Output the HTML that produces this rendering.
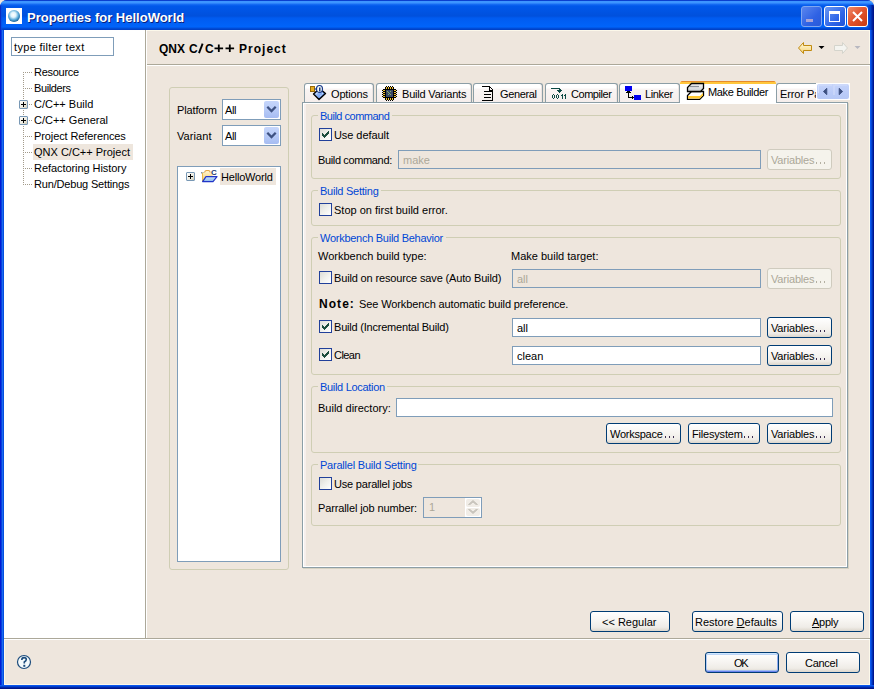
<!DOCTYPE html><html><head><meta charset="utf-8"><style>
*{margin:0;padding:0}
html,body{width:874px;height:689px;overflow:hidden;background:#EEE6DD}
.b{position:absolute;box-sizing:border-box}
.t{position:absolute;font:11px "Liberation Sans",sans-serif;line-height:13px;white-space:nowrap;color:#000}
.dis{color:#ACA899}
.gt{color:#0046D5}
.btn{border:1px solid #003C74;border-radius:3px;background:linear-gradient(#FFFFFF 0%,#F7F5F2 45%,#EFECE7 80%,#DCD6CC 100%)}
.btn.def{box-shadow:inset 0 1px 0 #CEE7FF, inset 0 2px 0 #BCD4F6, inset 0 -1px 0 #6982EE, inset 0 -2px 0 #A4BEF2, inset 1px 0 0 #B4CCF4, inset -1px 0 0 #8EAAF0}
.btn.dis{border-color:#CFCBBE;background:#F5F3EC}
.fld{border:1px solid #7F9DB9;background:#fff}
.fdis{background:#EEE6DD}
.chk{border:1px solid #21409A;background:linear-gradient(135deg,#DCDCD7 0%,#F0F0EC 50%,#FFFFFF 100%)}
.grp{border:1px solid #CFCEB4;border-radius:3px}
</style></head><body><div class="b" style="left:0;top:0;width:874px;height:689px;border-radius:7px 7px 0 0;background:#0054E3;overflow:hidden"><div class="b" style="left:0;top:0;width:874px;height:30px;background:linear-gradient(#0A3FCF 0px,#0A3FCF 1px,#3D95FF 1px,#3D95FF 3px,#1A6FF5 4px,#0058EA 6px,#0055E5 10px,#0050DC 16px,#005BF0 18px,#0064FA 27px,#0050DD 28px,#003CC0 30px)"></div><div class="b" style="left:0;top:5px;width:3px;height:25px;background:linear-gradient(90deg,#0A2CC0 0 1px,rgba(8,72,224,0.6) 1px 2px,rgba(8,80,230,0.2) 2px 3px)"></div><div class="b" style="left:867px;top:5px;width:7px;height:25px;background:linear-gradient(90deg,rgba(0,60,210,0.3) 0 1px,rgba(0,56,200,0.5) 1px 2px,rgba(0,50,190,0.7) 2px 3px,#0040C8 3px 4px,#0030B0 4px 5px,#00209C 5px 6px,#001488 6px 7px)"></div><div class="b" style="left:0;top:30px;width:4px;height:659px;background:linear-gradient(90deg,#001CD6 0 1px,#0840DD 1px 2px,#1A6AF0 2px 3px,#0450E0 3px 4px)"></div><div class="b" style="left:870px;top:30px;width:4px;height:659px;background:linear-gradient(90deg,#0A5AF0 0 1px,#0545D8 1px 2px,#0030B0 2px 3px,#001490 3px 4px)"></div><div class="b" style="left:0;top:685px;width:874px;height:4px;background:linear-gradient(#0A56EE 0 1px,#0040D0 1px 2px,#0028A8 2px 3px,#001488 3px 4px)"></div></div>
<div class="b" style="left:0;top:0;width:5px;height:5px;background:#D8CDB0;z-index:-1"></div>
<div class="b" style="left:6px;top:8px;width:16px;height:16px;background:#fff"><svg width="16" height="16" style="position:absolute;left:0;top:0"><defs><radialGradient id="gl" cx="45%" cy="40%" r="60%"><stop offset="0" stop-color="#ffffff"/><stop offset="0.35" stop-color="#E0F4FC"/><stop offset="0.7" stop-color="#5AAAD8"/><stop offset="1" stop-color="#15609A"/></radialGradient></defs><circle cx="8" cy="8" r="6" fill="url(#gl)"/></svg></div>
<div class="t" style="left:28px;top:11px;font:bold 13px 'Liberation Sans',sans-serif;line-height:16px;color:#0A1E7A">Properties for HelloWorld</div>
<div class="t" style="left:27px;top:10px;font:bold 13px 'Liberation Sans',sans-serif;line-height:16px;color:#fff">Properties for HelloWorld</div>
<div class="b" style="left:801px;top:6px;width:21px;height:21px;border:1px solid #7FA6F0;border-radius:3px;background:linear-gradient(135deg,#5A86EE,#2F62E4 60%,#2A5AD8)"><div class="b" style="left:4px;top:12px;width:7px;height:3px;background:#A9A4D6"></div></div>
<div class="b" style="left:824px;top:6px;width:22px;height:21px;border:1px solid #fff;border-radius:3px;background:linear-gradient(135deg,#6C98F2,#2F66E8 60%,#1E52D8)"><div class="b" style="left:4px;top:4px;width:11px;height:11px;border:1px solid #fff;border-top-width:3px"></div></div>
<div class="b" style="left:847px;top:6px;width:21px;height:21px;border:1px solid #fff;border-radius:3px;background:linear-gradient(135deg,#F08A68,#E0522C 50%,#C83A10)"><svg width="19" height="19" style="position:absolute;left:0;top:0"><path d="M5 5 L14 14 M14 5 L5 14" stroke="#fff" stroke-width="2"/></svg></div>
<div class="b" style="left:4px;top:30px;width:866px;height:655px;background:#EEE6DD;border:1px solid #FCF8EA;border-right-color:#FCF8EA"></div>
<div class="b" style="left:4px;top:30px;width:141px;height:608px;background:#fff"></div>
<div class="b" style="left:145px;top:30px;width:1px;height:608px;background:#ACA899"></div>
<div class="b" style="left:146px;top:30px;width:1px;height:608px;background:#fff"></div>
<div class="b" style="left:147px;top:64px;width:723px;height:1px;background:#ACA899"></div>
<div class="b" style="left:147px;top:65px;width:723px;height:1px;background:#fff"></div>
<div class="b" style="left:4px;top:638px;width:866px;height:1px;background:#ACA899"></div>
<div class="b" style="left:4px;top:639px;width:866px;height:1px;background:#fff"></div>
<div class="b fld" style="left:11px;top:37px;width:103px;height:19px;"></div>
<div class="t " style="left:14px;top:41px;font:11px 'Liberation Sans',sans-serif;line-height:13px;letter-spacing:0.32px;">type filter text</div>
<div class="b" style="left:23px;top:72px;width:1px;height:113px;background:repeating-linear-gradient(#A39B8B 0 1px,transparent 1px 2px)"></div>
<div class="b" style="left:25px;top:72px;width:8px;height:1px;background:repeating-linear-gradient(90deg,#A39B8B 0 1px,transparent 1px 2px)"></div>
<div class="t " style="left:34px;top:66px;font:11px 'Liberation Sans',sans-serif;line-height:13px;letter-spacing:-0.27px;">Resource</div>
<div class="b" style="left:25px;top:88px;width:8px;height:1px;background:repeating-linear-gradient(90deg,#A39B8B 0 1px,transparent 1px 2px)"></div>
<div class="t " style="left:34px;top:82px;font:11px 'Liberation Sans',sans-serif;line-height:13px;letter-spacing:-0.39px;">Builders</div>
<div class="b" style="left:25px;top:104px;width:8px;height:1px;background:repeating-linear-gradient(90deg,#A39B8B 0 1px,transparent 1px 2px)"></div>
<div class="b" style="left:19px;top:100px;width:9px;height:9px;border:1px solid #7898B5;border-radius:1px;background:linear-gradient(135deg,#fff,#E8E6DA 70%,#C8C4B0)"><div class="b" style="left:1px;top:3px;width:5px;height:1px;background:#000"></div><div class="b" style="left:3px;top:1px;width:1px;height:5px;background:#000"></div></div>
<div class="t " style="left:34px;top:98px;font:11px 'Liberation Sans',sans-serif;line-height:13px;">C/C++ Build</div>
<div class="b" style="left:25px;top:120px;width:8px;height:1px;background:repeating-linear-gradient(90deg,#A39B8B 0 1px,transparent 1px 2px)"></div>
<div class="b" style="left:19px;top:116px;width:9px;height:9px;border:1px solid #7898B5;border-radius:1px;background:linear-gradient(135deg,#fff,#E8E6DA 70%,#C8C4B0)"><div class="b" style="left:1px;top:3px;width:5px;height:1px;background:#000"></div><div class="b" style="left:3px;top:1px;width:1px;height:5px;background:#000"></div></div>
<div class="t " style="left:34px;top:114px;font:11px 'Liberation Sans',sans-serif;line-height:13px;">C/C++ General</div>
<div class="b" style="left:25px;top:136px;width:8px;height:1px;background:repeating-linear-gradient(90deg,#A39B8B 0 1px,transparent 1px 2px)"></div>
<div class="t " style="left:34px;top:130px;font:11px 'Liberation Sans',sans-serif;line-height:13px;letter-spacing:-0.10px;">Project References</div>
<div class="b " style="left:33px;top:144px;width:100px;height:16px;background:#EEE6DD"></div>
<div class="b" style="left:25px;top:152px;width:8px;height:1px;background:repeating-linear-gradient(90deg,#A39B8B 0 1px,transparent 1px 2px)"></div>
<div class="t " style="left:34px;top:146px;font:11px 'Liberation Sans',sans-serif;line-height:13px;">QNX C/C++ Project</div>
<div class="b" style="left:25px;top:168px;width:8px;height:1px;background:repeating-linear-gradient(90deg,#A39B8B 0 1px,transparent 1px 2px)"></div>
<div class="t " style="left:34px;top:162px;font:11px 'Liberation Sans',sans-serif;line-height:13px;letter-spacing:-0.06px;">Refactoring History</div>
<div class="b" style="left:25px;top:184px;width:8px;height:1px;background:repeating-linear-gradient(90deg,#A39B8B 0 1px,transparent 1px 2px)"></div>
<div class="t " style="left:34px;top:178px;font:11px 'Liberation Sans',sans-serif;line-height:13px;letter-spacing:-0.18px;">Run/Debug Settings</div>
<div class="t " style="left:159px;top:42px;font:bold 12px 'Liberation Sans',sans-serif;line-height:15px;">QNX</div>
<div class="t " style="left:189px;top:42px;font:bold 12px 'Liberation Sans',sans-serif;line-height:15px;">C</div>
<svg style="position:absolute;left:190px;top:40px" width="20" height="16"><path d="M9 13.2 L12.6 3.6" stroke="#000" stroke-width="1.9"/></svg>
<div class="t " style="left:205px;top:42px;font:bold 12px 'Liberation Sans',sans-serif;line-height:15px;">C</div>
<svg style="position:absolute;left:210px;top:40px" width="30" height="16"><path d="M4.5 8.3 H13.1 M8.8 4.5 V12.1 M15.5 8.3 H24.1 M19.8 4.5 V12.1" stroke="#000" stroke-width="1.8"/></svg>
<div class="t " style="left:239px;top:42px;font:bold 12px 'Liberation Sans',sans-serif;line-height:15px;letter-spacing:1.02px;">Project</div>
<svg style="position:absolute;left:796px;top:40px" width="70" height="16"><defs><linearGradient id="ya" x1="0" y1="0" x2="0" y2="1"><stop offset="0" stop-color="#FFFBE2"/><stop offset="1" stop-color="#F6D272"/></linearGradient></defs><path d="M2.5 8 L7.5 2.5 L7.5 5.5 L15.5 5.5 L15.5 10.5 L7.5 10.5 L7.5 13.5 Z" fill="url(#ya)" stroke="#C08A10" stroke-width="1"/><path d="M22.5 6 L28.5 6 L25.5 9 Z" fill="#000"/><path d="M51.5 8 L46.5 2.5 L46.5 5.5 L38.5 5.5 L38.5 10.5 L46.5 10.5 L46.5 13.5 Z" fill="#F4F4F0" stroke="#D4D4CC" stroke-width="1"/><path d="M58.5 6 L64.5 6 L61.5 9 Z" fill="#B8B8C0"/></svg>
<div class="b grp" style="left:169px;top:87px;width:120px;height:483px;"></div>
<div class="t " style="left:177px;top:104px;font:11px 'Liberation Sans',sans-serif;line-height:13px;letter-spacing:-0.14px;">Platform</div>
<div class="t " style="left:177px;top:130px;font:11px 'Liberation Sans',sans-serif;line-height:13px;letter-spacing:0.08px;">Variant</div>
<div class="b fld" style="left:222px;top:99px;width:59px;height:21px;"></div>
<div class="t " style="left:225px;top:104px;font:11px 'Liberation Sans',sans-serif;line-height:13px;">A</div>
<div class="t " style="left:232px;top:104px;font:11px 'Liberation Sans',sans-serif;line-height:13px;">l</div>
<div class="t " style="left:234px;top:104px;font:11px 'Liberation Sans',sans-serif;line-height:13px;">l</div>
<div class="b" style="left:264px;top:101px;width:15px;height:17px;border-radius:2px;background:linear-gradient(#C6D6FB,#B4C8F6 60%,#A6BCF2)"><svg width="15" height="17" style="position:absolute;left:0;top:0"><path d="M3.3 5.8 L7.5 10 L11.7 5.8" stroke="#3E5282" stroke-width="2.3" fill="none"/></svg></div>
<div class="b fld" style="left:222px;top:125px;width:59px;height:21px;"></div>
<div class="t " style="left:225px;top:130px;font:11px 'Liberation Sans',sans-serif;line-height:13px;">A</div>
<div class="t " style="left:232px;top:130px;font:11px 'Liberation Sans',sans-serif;line-height:13px;">l</div>
<div class="t " style="left:234px;top:130px;font:11px 'Liberation Sans',sans-serif;line-height:13px;">l</div>
<div class="b" style="left:264px;top:127px;width:15px;height:17px;border-radius:2px;background:linear-gradient(#C6D6FB,#B4C8F6 60%,#A6BCF2)"><svg width="15" height="17" style="position:absolute;left:0;top:0"><path d="M3.3 5.8 L7.5 10 L11.7 5.8" stroke="#3E5282" stroke-width="2.3" fill="none"/></svg></div>
<div class="b fld" style="left:177px;top:166px;width:104px;height:396px;"></div>
<div class="b" style="left:186px;top:172px;width:9px;height:9px;border:1px solid #7898B5;border-radius:1px;background:linear-gradient(135deg,#fff,#E8E6DA 70%,#C8C4B0)"><div class="b" style="left:1px;top:3px;width:5px;height:1px;background:#000"></div><div class="b" style="left:3px;top:1px;width:1px;height:5px;background:#000"></div></div>
<div class="b " style="left:220px;top:168px;width:56px;height:17px;background:#EEE6DD"></div>
<svg style="position:absolute;left:200px;top:168px" width="19" height="16"><defs><linearGradient id="fy" x1="0" y1="0" x2="0" y2="1"><stop offset="0" stop-color="#FFF0C0"/><stop offset="1" stop-color="#F2C860"/></linearGradient><linearGradient id="fb" x1="0" y1="0" x2="0" y2="1"><stop offset="0" stop-color="#CDE6FA"/><stop offset="1" stop-color="#8CB8EC"/></linearGradient></defs><rect x="1" y="4" width="3" height="1.5" fill="#8898A8"/><path d="M4.5 5 Q4.8 2.5 6.5 2.5 L8.5 2.5 Q10 2.5 10.2 5" stroke="#E2A84A" stroke-width="1.1" fill="#FFF2C8"/><rect x="2" y="4.5" width="10.5" height="9" fill="url(#fy)"/><path d="M2.5 5 V13.5" stroke="#E8B848" stroke-width="1"/><path d="M6 8.6 L17 8.6 L13 13.6 L2.6 13.6 Z" fill="url(#fb)" stroke="#2034C8" stroke-width="1.2" stroke-linejoin="round"/><text x="11" y="6.8" font-family="Liberation Sans" font-size="8" font-weight="bold" fill="#1C3A70">C</text></svg>
<div class="t " style="left:221px;top:171px;font:11px 'Liberation Sans',sans-serif;line-height:13px;letter-spacing:-0.19px;">HelloWorld</div>
<div class="b " style="left:302px;top:102px;width:546px;height:466px;border:1px solid #8C9EA6;background:#EEE6DD"></div>
<div class="b " style="left:303px;top:103px;width:544px;height:464px;border:1px solid #fff"></div>
<div class="b" style="left:304px;top:104px;width:2px;height:462px;background:#F6EFEC"></div>
<div class="b" style="left:848px;top:103px;width:1px;height:466px;background:#D6D2C2"></div>
<div class="b" style="left:303px;top:568px;width:546px;height:1px;background:#D6D2C2"></div>
<div class="b" style="left:304px;top:83px;width:70px;height:19px;border:1px solid #8C9EA6;border-bottom:none;border-radius:3px 3px 0 0;background:linear-gradient(#FFFFFF 0,#FFFFFF 4px,#F9F4F3 5px,#F5EEEC 100%);box-shadow:inset -1px 0 #ECE4E1"></div>
<div class="t " style="left:331px;top:88px;font:11px 'Liberation Sans',sans-serif;line-height:13px;letter-spacing:-0.17px;">Options</div>
<svg style="position:absolute;left:308px;top:84px" width="20" height="17"><defs><linearGradient id="og" x1="0" y1="0" x2="1" y2="1"><stop offset="0" stop-color="#D6E6FF"/><stop offset="1" stop-color="#3A78E8"/></linearGradient></defs><path d="M5.5 10 L11.5 4.5 L17.5 9.5 L11 15.5 Z" fill="url(#og)" stroke="#000" stroke-width="1.4" stroke-linejoin="round"/><path d="M8 10 L11.5 7 L15 9.8 L11 13" fill="none" stroke="#E8F0FF" stroke-width="1" stroke-dasharray="1 1"/><rect x="2.5" y="2.5" width="4" height="5" fill="#E6AE22" stroke="#9A6A08" stroke-width="1"/><ellipse cx="11.5" cy="5" rx="3" ry="3.5" fill="#F4F8F0" stroke="#1A3A8A" stroke-width="1.2"/><path d="M6.5 5 L8.5 5" stroke="#1A3A8A" stroke-width="1.2"/><rect x="11" y="3.5" width="1.5" height="4" fill="#1A3A8A"/></svg>
<div class="b" style="left:376px;top:83px;width:96px;height:19px;border:1px solid #8C9EA6;border-bottom:none;border-radius:3px 3px 0 0;background:linear-gradient(#FFFFFF 0,#FFFFFF 4px,#F9F4F3 5px,#F5EEEC 100%);box-shadow:inset -1px 0 #ECE4E1"></div>
<div class="t " style="left:402px;top:88px;font:11px 'Liberation Sans',sans-serif;line-height:13px;letter-spacing:-0.20px;">Build Variants</div>
<svg style="position:absolute;left:382px;top:86px" width="17" height="16" shape-rendering="crispEdges"><rect x="4" y="0" width="1" height="1" fill="#000"/><rect x="6" y="0" width="1" height="1" fill="#000"/><rect x="8" y="0" width="1" height="1" fill="#000"/><rect x="10" y="0" width="1" height="1" fill="#000"/><rect x="3" y="1" width="1" height="1" fill="#000"/><rect x="4" y="1" width="1" height="1" fill="#F2C030"/><rect x="5" y="1" width="1" height="1" fill="#000"/><rect x="6" y="1" width="1" height="1" fill="#F2C030"/><rect x="7" y="1" width="1" height="1" fill="#000"/><rect x="8" y="1" width="1" height="1" fill="#F2C030"/><rect x="9" y="1" width="1" height="1" fill="#000"/><rect x="10" y="1" width="1" height="1" fill="#F2C030"/><rect x="11" y="1" width="1" height="1" fill="#000"/><rect x="3" y="2" width="1" height="1" fill="#000"/><rect x="4" y="2" width="1" height="1" fill="#F2C030"/><rect x="5" y="2" width="1" height="1" fill="#000"/><rect x="6" y="2" width="1" height="1" fill="#F2C030"/><rect x="7" y="2" width="1" height="1" fill="#000"/><rect x="8" y="2" width="1" height="1" fill="#F2C030"/><rect x="9" y="2" width="1" height="1" fill="#000"/><rect x="10" y="2" width="1" height="1" fill="#F2C030"/><rect x="11" y="2" width="1" height="1" fill="#000"/><rect x="1" y="3" width="13" height="1" fill="#000"/><rect x="0" y="4" width="1" height="1" fill="#000"/><rect x="1" y="4" width="2" height="1" fill="#F2C030"/><rect x="3" y="4" width="1" height="1" fill="#000"/><rect x="4" y="4" width="7" height="1" fill="#3A4868"/><rect x="11" y="4" width="1" height="1" fill="#000"/><rect x="12" y="4" width="2" height="1" fill="#F2C030"/><rect x="14" y="4" width="1" height="1" fill="#000"/><rect x="1" y="5" width="3" height="1" fill="#000"/><rect x="4" y="5" width="1" height="1" fill="#3A4868"/><rect x="5" y="5" width="1" height="1" fill="#8CB060"/><rect x="6" y="5" width="2" height="1" fill="#3A4868"/><rect x="8" y="5" width="1" height="1" fill="#8CB060"/><rect x="9" y="5" width="2" height="1" fill="#3A4868"/><rect x="11" y="5" width="3" height="1" fill="#000"/><rect x="0" y="6" width="1" height="1" fill="#000"/><rect x="1" y="6" width="2" height="1" fill="#F2C030"/><rect x="3" y="6" width="1" height="1" fill="#000"/><rect x="4" y="6" width="2" height="1" fill="#3A4868"/><rect x="6" y="6" width="1" height="1" fill="#8CB060"/><rect x="7" y="6" width="4" height="1" fill="#3A4868"/><rect x="11" y="6" width="1" height="1" fill="#000"/><rect x="12" y="6" width="2" height="1" fill="#F2C030"/><rect x="14" y="6" width="1" height="1" fill="#000"/><rect x="1" y="7" width="3" height="1" fill="#000"/><rect x="4" y="7" width="3" height="1" fill="#3A4868"/><rect x="7" y="7" width="1" height="1" fill="#8CB060"/><rect x="8" y="7" width="3" height="1" fill="#3A4868"/><rect x="11" y="7" width="3" height="1" fill="#000"/><rect x="0" y="8" width="1" height="1" fill="#000"/><rect x="1" y="8" width="2" height="1" fill="#F2C030"/><rect x="3" y="8" width="1" height="1" fill="#000"/><rect x="4" y="8" width="2" height="1" fill="#3A4868"/><rect x="6" y="8" width="1" height="1" fill="#8CB060"/><rect x="7" y="8" width="1" height="1" fill="#3A4868"/><rect x="8" y="8" width="1" height="1" fill="#8CB060"/><rect x="9" y="8" width="2" height="1" fill="#3A4868"/><rect x="11" y="8" width="1" height="1" fill="#000"/><rect x="12" y="8" width="2" height="1" fill="#F2C030"/><rect x="14" y="8" width="1" height="1" fill="#000"/><rect x="1" y="9" width="3" height="1" fill="#000"/><rect x="4" y="9" width="7" height="1" fill="#3A4868"/><rect x="11" y="9" width="3" height="1" fill="#000"/><rect x="0" y="10" width="1" height="1" fill="#000"/><rect x="1" y="10" width="2" height="1" fill="#F2C030"/><rect x="3" y="10" width="1" height="1" fill="#000"/><rect x="4" y="10" width="7" height="1" fill="#3A4868"/><rect x="11" y="10" width="1" height="1" fill="#000"/><rect x="12" y="10" width="2" height="1" fill="#F2C030"/><rect x="14" y="10" width="1" height="1" fill="#000"/><rect x="1" y="11" width="13" height="1" fill="#000"/><rect x="3" y="12" width="1" height="1" fill="#000"/><rect x="4" y="12" width="1" height="1" fill="#F2C030"/><rect x="5" y="12" width="1" height="1" fill="#000"/><rect x="6" y="12" width="1" height="1" fill="#F2C030"/><rect x="7" y="12" width="1" height="1" fill="#000"/><rect x="8" y="12" width="1" height="1" fill="#F2C030"/><rect x="9" y="12" width="1" height="1" fill="#000"/><rect x="10" y="12" width="1" height="1" fill="#F2C030"/><rect x="11" y="12" width="1" height="1" fill="#000"/><rect x="3" y="13" width="1" height="1" fill="#000"/><rect x="4" y="13" width="1" height="1" fill="#F2C030"/><rect x="5" y="13" width="1" height="1" fill="#000"/><rect x="6" y="13" width="1" height="1" fill="#F2C030"/><rect x="7" y="13" width="1" height="1" fill="#000"/><rect x="8" y="13" width="1" height="1" fill="#F2C030"/><rect x="9" y="13" width="1" height="1" fill="#000"/><rect x="10" y="13" width="1" height="1" fill="#F2C030"/><rect x="11" y="13" width="1" height="1" fill="#000"/><rect x="4" y="14" width="1" height="1" fill="#000"/><rect x="6" y="14" width="1" height="1" fill="#000"/><rect x="8" y="14" width="1" height="1" fill="#000"/><rect x="10" y="14" width="1" height="1" fill="#000"/></svg>
<div class="b" style="left:473px;top:83px;width:70px;height:19px;border:1px solid #8C9EA6;border-bottom:none;border-radius:3px 3px 0 0;background:linear-gradient(#FFFFFF 0,#FFFFFF 4px,#F9F4F3 5px,#F5EEEC 100%);box-shadow:inset -1px 0 #ECE4E1"></div>
<div class="t " style="left:500px;top:88px;font:11px 'Liberation Sans',sans-serif;line-height:13px;letter-spacing:-0.37px;">General</div>
<svg style="position:absolute;left:481px;top:86px" width="13" height="15" shape-rendering="crispEdges"><rect x="1" y="0" width="8" height="1" fill="#000"/><rect x="8" y="1" width="2" height="1" fill="#000"/><rect x="8" y="2" width="1" height="1" fill="#000"/><rect x="10" y="2" width="1" height="1" fill="#000"/><rect x="8" y="3" width="1" height="1" fill="#000"/><rect x="11" y="3" width="1" height="1" fill="#000"/><rect x="8" y="4" width="4" height="1" fill="#000"/><rect x="3" y="5" width="9" height="1" fill="#000"/><rect x="11" y="6" width="1" height="1" fill="#000"/><rect x="11" y="7" width="1" height="1" fill="#000"/><rect x="3" y="8" width="7" height="1" fill="#000"/><rect x="11" y="8" width="1" height="1" fill="#000"/><rect x="11" y="9" width="1" height="1" fill="#000"/><rect x="11" y="10" width="1" height="1" fill="#000"/><rect x="3" y="11" width="7" height="1" fill="#000"/><rect x="11" y="11" width="1" height="1" fill="#000"/><rect x="11" y="12" width="1" height="1" fill="#000"/><rect x="11" y="13" width="1" height="1" fill="#000"/><rect x="1" y="14" width="11" height="1" fill="#000"/></svg>
<div class="b" style="left:545px;top:83px;width:73px;height:19px;border:1px solid #8C9EA6;border-bottom:none;border-radius:3px 3px 0 0;background:linear-gradient(#FFFFFF 0,#FFFFFF 4px,#F9F4F3 5px,#F5EEEC 100%);box-shadow:inset -1px 0 #ECE4E1"></div>
<div class="t " style="left:571px;top:88px;font:11px 'Liberation Sans',sans-serif;line-height:13px;letter-spacing:-0.46px;">Compiler</div>
<svg style="position:absolute;left:550px;top:87px" width="17" height="13" shape-rendering="crispEdges"><rect x="1" y="1" width="9" height="1" fill="#0C4A44"/><rect x="9" y="2" width="2" height="1" fill="#0C4A44"/><rect x="7" y="3" width="5" height="1" fill="#0C4A44"/><rect x="8" y="4" width="3" height="1" fill="#0C4A44"/><rect x="9" y="5" width="1" height="1" fill="#0C4A44"/><rect x="3" y="7" width="1" height="1" fill="#0C4A44"/><rect x="7" y="7" width="1" height="1" fill="#0C4A44"/><rect x="12" y="7" width="1" height="1" fill="#0C4A44"/><rect x="15" y="7" width="1" height="1" fill="#0C4A44"/><rect x="2" y="8" width="1" height="1" fill="#0C4A44"/><rect x="4" y="8" width="1" height="1" fill="#0C4A44"/><rect x="6" y="8" width="1" height="1" fill="#0C4A44"/><rect x="8" y="8" width="1" height="1" fill="#0C4A44"/><rect x="11" y="8" width="2" height="1" fill="#0C4A44"/><rect x="14" y="8" width="2" height="1" fill="#0C4A44"/><rect x="2" y="9" width="1" height="1" fill="#0C4A44"/><rect x="4" y="9" width="1" height="1" fill="#0C4A44"/><rect x="6" y="9" width="1" height="1" fill="#0C4A44"/><rect x="8" y="9" width="1" height="1" fill="#0C4A44"/><rect x="12" y="9" width="1" height="1" fill="#0C4A44"/><rect x="15" y="9" width="1" height="1" fill="#0C4A44"/><rect x="2" y="10" width="1" height="1" fill="#0C4A44"/><rect x="4" y="10" width="1" height="1" fill="#0C4A44"/><rect x="6" y="10" width="1" height="1" fill="#0C4A44"/><rect x="8" y="10" width="1" height="1" fill="#0C4A44"/><rect x="12" y="10" width="1" height="1" fill="#0C4A44"/><rect x="15" y="10" width="1" height="1" fill="#0C4A44"/><rect x="3" y="11" width="1" height="1" fill="#0C4A44"/><rect x="7" y="11" width="1" height="1" fill="#0C4A44"/><rect x="12" y="11" width="1" height="1" fill="#0C4A44"/><rect x="15" y="11" width="1" height="1" fill="#0C4A44"/></svg>
<div class="b" style="left:619px;top:83px;width:61px;height:19px;border:1px solid #8C9EA6;border-bottom:none;border-radius:3px 3px 0 0;background:linear-gradient(#FFFFFF 0,#FFFFFF 4px,#F9F4F3 5px,#F5EEEC 100%);box-shadow:inset -1px 0 #ECE4E1"></div>
<div class="t " style="left:645px;top:88px;font:11px 'Liberation Sans',sans-serif;line-height:13px;letter-spacing:-0.38px;">Linker</div>
<svg style="position:absolute;left:624px;top:85px" width="18" height="16" shape-rendering="crispEdges"><rect x="1" y="1" width="7" height="1" fill="#0000F0"/><rect x="1" y="2" width="7" height="1" fill="#0000F0"/><rect x="1" y="3" width="7" height="1" fill="#0000F0"/><rect x="1" y="4" width="7" height="1" fill="#0000F0"/><rect x="1" y="5" width="7" height="1" fill="#0000F0"/><rect x="3" y="6" width="3" height="1" fill="#000"/><rect x="2" y="7" width="5" height="1" fill="#000"/><rect x="4" y="8" width="1" height="1" fill="#000"/><rect x="4" y="9" width="1" height="1" fill="#000"/><rect x="4" y="10" width="1" height="1" fill="#000"/><rect x="10" y="10" width="7" height="1" fill="#0000F0"/><rect x="4" y="11" width="1" height="1" fill="#000"/><rect x="8" y="11" width="1" height="1" fill="#000"/><rect x="10" y="11" width="7" height="1" fill="#0000F0"/><rect x="4" y="12" width="6" height="1" fill="#000"/><rect x="10" y="12" width="7" height="1" fill="#0000F0"/><rect x="8" y="13" width="1" height="1" fill="#000"/><rect x="10" y="13" width="7" height="1" fill="#0000F0"/><rect x="10" y="14" width="7" height="1" fill="#0000F0"/></svg>
<div class="b" style="left:776px;top:83px;width:45px;height:19px;border:1px solid #8C9EA6;border-bottom:none;border-right:none;border-radius:3px 0 0 0;background:linear-gradient(#FFFFFF 0,#FFFFFF 4px,#F9F4F3 5px,#F5EEEC 100%);box-shadow:inset -1px 0 #ECE4E1;overflow:hidden"><div class="t" style="left:3px;top:4px;letter-spacing:-0.1px">Error Pages</div></div>
<div class="b" style="left:680px;top:81px;width:96px;height:23px;background:#fff"></div>
<div class="b" style="left:680px;top:81px;width:96px;height:3px;border-radius:2px 2px 0 0;background:linear-gradient(#E68B2C 0,#E68B2C 1px,#FFC73C 1px)"></div>
<div class="t " style="left:708px;top:86px;font:11px 'Liberation Sans',sans-serif;line-height:13px;letter-spacing:-0.35px;">Make Builder</div>
<svg style="position:absolute;left:685px;top:82px" width="20" height="18"><defs><linearGradient id="mg" x1="0" y1="0" x2="0" y2="1"><stop offset="0" stop-color="#F8F8F8"/><stop offset="1" stop-color="#C8CCD0"/></linearGradient></defs><path d="M6.5 9.5 H18.5 V13.5 L14.5 17.5 H2.5 V13.5 Z" fill="#fff" stroke="#000" stroke-width="1.3"/><rect x="3" y="14" width="12" height="2.5" fill="#FFC830"/><path d="M15 14 L18 11 L18 13.3 L14.8 16.8 Z" fill="#FFC830"/><path d="M6.5 1.5 H18.5 V6.5 L15.5 9.5 H2.5 V5.5 Z" fill="url(#mg)" stroke="#000" stroke-width="1.3"/><path d="M5 4.5 H14" stroke="#8A9098" stroke-width="1.2"/></svg>
<div class="b" style="left:816px;top:83px;width:34px;height:17px;background:#fff"></div>
<div class="b" style="left:817px;top:84px;width:32px;height:15px;border-radius:2px;background:linear-gradient(#C6D4FA,#BACBF8 60%,#B6C8F6)"></div>
<svg style="position:absolute;left:816px;top:83px" width="34" height="17"><path d="M2.5 2 H16 M2.5 2 V10 M18 1.5 V12 M19 2 H31" stroke="#D4DFFB" stroke-width="1"/><path d="M10.8 5.3 L7.4 8.5 L10.8 11.7 Z M23.2 5.3 L26.6 8.5 L23.2 11.7 Z" fill="#3C4F80" stroke="#3C4F80" stroke-width="0.9" stroke-linejoin="round"/></svg>
<div class="b grp" style="left:311px;top:115px;width:530px;height:64px;"></div>
<div class="b" style="left:318px;top:113px;width:74px;height:5px;background:#EEE6DD"></div>
<div class="t gt" style="left:320px;top:110px;font:11px 'Liberation Sans',sans-serif;line-height:13px;letter-spacing:-0.50px;">Build command</div>
<div class="b chk" style="left:319px;top:128px;width:13px;height:13px;"><svg width="13" height="13" style="position:absolute;left:-1px;top:-1px" shape-rendering="crispEdges"><path fill="#1B4D3E" d="M9 3h1v1h-1z M8 4h2v1h-2z M3 5h1v1h-1z M7 5h3v1h-3z M3 6h2v1h-2z M6 6h3v1h-3z M3 7h5v1h-5z M4 8h3v1h-3z M5 9h1v1h-1z"/></svg></div>
<div class="t " style="left:334px;top:129px;font:11px 'Liberation Sans',sans-serif;line-height:13px;letter-spacing:-0.07px;">Use default</div>
<div class="t " style="left:318px;top:154px;font:11px 'Liberation Sans',sans-serif;line-height:13px;letter-spacing:-0.36px;">Build command:</div>
<div class="b fld fdis" style="left:398px;top:150px;width:363px;height:19px;"></div>
<div class="t dis" style="left:403px;top:154px;font:11px 'Liberation Sans',sans-serif;line-height:13px;">make</div>
<div class="b btn dis" style="left:767px;top:149px;width:65px;height:21px;"></div>
<div class="t dis" style="left:771px;top:154px;font:11px 'Liberation Sans',sans-serif;line-height:13px;letter-spacing:-0.19px;">Variables</div>
<div class="b" style="left:816px;top:162px;width:1px;height:2px;background:#B4B0A2"></div>
<div class="b" style="left:820px;top:162px;width:1px;height:2px;background:#B4B0A2"></div>
<div class="b" style="left:824px;top:162px;width:1px;height:2px;background:#B4B0A2"></div>
<div class="b grp" style="left:311px;top:190px;width:530px;height:36px;"></div>
<div class="b" style="left:318px;top:188px;width:63px;height:5px;background:#EEE6DD"></div>
<div class="t gt" style="left:320px;top:185px;font:11px 'Liberation Sans',sans-serif;line-height:13px;letter-spacing:-0.25px;">Build Setting</div>
<div class="b chk" style="left:319px;top:203px;width:13px;height:13px;"></div>
<div class="t " style="left:334px;top:204px;font:11px 'Liberation Sans',sans-serif;line-height:13px;">Stop on first build error.</div>
<div class="b grp" style="left:311px;top:237px;width:530px;height:138px;"></div>
<div class="b" style="left:318px;top:235px;width:127.69999999999999px;height:5px;background:#EEE6DD"></div>
<div class="t gt" style="left:320px;top:232px;font:11px 'Liberation Sans',sans-serif;line-height:13px;letter-spacing:-0.27px;">Workbench Build Behavior</div>
<div class="t " style="left:318px;top:250px;font:11px 'Liberation Sans',sans-serif;line-height:13px;">Workbench build type:</div>
<div class="t " style="left:511px;top:250px;font:11px 'Liberation Sans',sans-serif;line-height:13px;">Make build target:</div>
<div class="b chk" style="left:319px;top:271px;width:13px;height:13px;"></div>
<div class="t " style="left:334px;top:272px;font:11px 'Liberation Sans',sans-serif;line-height:13px;letter-spacing:-0.15px;">Build on resource save (Auto Build)</div>
<div class="b fld fdis" style="left:512px;top:269px;width:249px;height:19px;"></div>
<div class="t dis" style="left:517px;top:273px;font:11px 'Liberation Sans',sans-serif;line-height:13px;">all</div>
<div class="b btn dis" style="left:767px;top:268px;width:65px;height:21px;"></div>
<div class="t dis" style="left:771px;top:273px;font:11px 'Liberation Sans',sans-serif;line-height:13px;letter-spacing:-0.19px;">Variables</div>
<div class="b" style="left:816px;top:281px;width:1px;height:2px;background:#B4B0A2"></div>
<div class="b" style="left:820px;top:281px;width:1px;height:2px;background:#B4B0A2"></div>
<div class="b" style="left:824px;top:281px;width:1px;height:2px;background:#B4B0A2"></div>
<div class="t " style="left:319px;top:297px;font:bold 12px 'Liberation Sans',sans-serif;line-height:15px;letter-spacing:1.05px;">Note:</div>
<div class="t " style="left:359px;top:298px;font:11px 'Liberation Sans',sans-serif;line-height:13px;letter-spacing:-0.11px;">See Workbench automatic build preference.</div>
<div class="b chk" style="left:319px;top:320px;width:13px;height:13px;"><svg width="13" height="13" style="position:absolute;left:-1px;top:-1px" shape-rendering="crispEdges"><path fill="#1B4D3E" d="M9 3h1v1h-1z M8 4h2v1h-2z M3 5h1v1h-1z M7 5h3v1h-3z M3 6h2v1h-2z M6 6h3v1h-3z M3 7h5v1h-5z M4 8h3v1h-3z M5 9h1v1h-1z"/></svg></div>
<div class="t " style="left:334px;top:321px;font:11px 'Liberation Sans',sans-serif;line-height:13px;letter-spacing:-0.21px;">Build (Incremental Build)</div>
<div class="b fld" style="left:512px;top:318px;width:249px;height:19px;"></div>
<div class="t " style="left:517px;top:322px;font:11px 'Liberation Sans',sans-serif;line-height:13px;">all</div>
<div class="b btn" style="left:767px;top:317px;width:65px;height:21px;"></div>
<div class="t " style="left:771px;top:322px;font:11px 'Liberation Sans',sans-serif;line-height:13px;letter-spacing:-0.19px;">Variables</div>
<div class="b" style="left:816px;top:330px;width:1px;height:2px;background:#3A2C50"></div>
<div class="b" style="left:820px;top:330px;width:1px;height:2px;background:#3A2C50"></div>
<div class="b" style="left:824px;top:330px;width:1px;height:2px;background:#3A2C50"></div>
<div class="b chk" style="left:319px;top:348px;width:13px;height:13px;"><svg width="13" height="13" style="position:absolute;left:-1px;top:-1px" shape-rendering="crispEdges"><path fill="#1B4D3E" d="M9 3h1v1h-1z M8 4h2v1h-2z M3 5h1v1h-1z M7 5h3v1h-3z M3 6h2v1h-2z M6 6h3v1h-3z M3 7h5v1h-5z M4 8h3v1h-3z M5 9h1v1h-1z"/></svg></div>
<div class="t " style="left:334px;top:349px;font:11px 'Liberation Sans',sans-serif;line-height:13px;letter-spacing:-0.55px;">Clean</div>
<div class="b fld" style="left:512px;top:346px;width:249px;height:19px;"></div>
<div class="t " style="left:517px;top:350px;font:11px 'Liberation Sans',sans-serif;line-height:13px;">clean</div>
<div class="b btn" style="left:767px;top:345px;width:65px;height:21px;"></div>
<div class="t " style="left:771px;top:350px;font:11px 'Liberation Sans',sans-serif;line-height:13px;letter-spacing:-0.19px;">Variables</div>
<div class="b" style="left:816px;top:358px;width:1px;height:2px;background:#3A2C50"></div>
<div class="b" style="left:820px;top:358px;width:1px;height:2px;background:#3A2C50"></div>
<div class="b" style="left:824px;top:358px;width:1px;height:2px;background:#3A2C50"></div>
<div class="b grp" style="left:311px;top:386px;width:530px;height:67px;"></div>
<div class="b" style="left:318px;top:384px;width:69px;height:5px;background:#EEE6DD"></div>
<div class="t gt" style="left:320px;top:381px;font:11px 'Liberation Sans',sans-serif;line-height:13px;letter-spacing:-0.31px;">Build Location</div>
<div class="t " style="left:318px;top:402px;font:11px 'Liberation Sans',sans-serif;line-height:13px;">Build directory:</div>
<div class="b fld" style="left:396px;top:398px;width:437px;height:19px;"></div>
<div class="b btn" style="left:606px;top:423px;width:75px;height:21px;"></div>
<div class="t " style="left:610px;top:428px;font:11px 'Liberation Sans',sans-serif;line-height:13px;letter-spacing:-0.25px;">Workspace</div>
<div class="b" style="left:665px;top:436px;width:1px;height:2px;background:#3A2C50"></div>
<div class="b" style="left:669px;top:436px;width:1px;height:2px;background:#3A2C50"></div>
<div class="b" style="left:673px;top:436px;width:1px;height:2px;background:#3A2C50"></div>
<div class="b btn" style="left:688px;top:423px;width:72px;height:21px;"></div>
<div class="t " style="left:692px;top:428px;font:11px 'Liberation Sans',sans-serif;line-height:13px;letter-spacing:-0.19px;">Filesystem</div>
<div class="b" style="left:744px;top:436px;width:1px;height:2px;background:#3A2C50"></div>
<div class="b" style="left:748px;top:436px;width:1px;height:2px;background:#3A2C50"></div>
<div class="b" style="left:752px;top:436px;width:1px;height:2px;background:#3A2C50"></div>
<div class="b btn" style="left:767px;top:423px;width:65px;height:21px;"></div>
<div class="t " style="left:771px;top:428px;font:11px 'Liberation Sans',sans-serif;line-height:13px;letter-spacing:-0.19px;">Variables</div>
<div class="b" style="left:816px;top:436px;width:1px;height:2px;background:#3A2C50"></div>
<div class="b" style="left:820px;top:436px;width:1px;height:2px;background:#3A2C50"></div>
<div class="b" style="left:824px;top:436px;width:1px;height:2px;background:#3A2C50"></div>
<div class="b grp" style="left:311px;top:464px;width:530px;height:62px;"></div>
<div class="b" style="left:318px;top:462px;width:100.30000000000001px;height:5px;background:#EEE6DD"></div>
<div class="t gt" style="left:320px;top:459px;font:11px 'Liberation Sans',sans-serif;line-height:13px;letter-spacing:-0.22px;">Parallel Build Setting</div>
<div class="b chk" style="left:319px;top:477px;width:13px;height:13px;"></div>
<div class="t " style="left:334px;top:478px;font:11px 'Liberation Sans',sans-serif;line-height:13px;letter-spacing:-0.19px;">Use parallel jobs</div>
<div class="t " style="left:318px;top:502px;font:11px 'Liberation Sans',sans-serif;line-height:13px;letter-spacing:-0.12px;">Parrallel job number:</div>
<div class="b fld fdis" style="left:423px;top:497px;width:59px;height:21px;"></div>
<div class="t dis" style="left:429px;top:501px;font:11px 'Liberation Sans',sans-serif;line-height:13px;">1</div>
<div class="b" style="left:465px;top:498px;width:16px;height:19px;background:#fff"></div>
<div class="b" style="left:466px;top:499px;width:14px;height:8px;border-radius:2px;background:#F1EDE7"></div>
<div class="b" style="left:466px;top:508px;width:14px;height:8px;border-radius:2px;background:#F1EDE7"></div>
<svg style="position:absolute;left:465px;top:498px" width="16" height="19"><path d="M3.5 6.5 L8 2.5 L12.5 6.5 L11 6.5 L8 4 L5 6.5 Z M3.5 11.5 L8 15.5 L12.5 11.5 L11 11.5 L8 14 L5 11.5 Z" fill="#C9C5BD" stroke="#C9C5BD" stroke-width="1"/></svg>
<div class="b btn" style="left:590px;top:611px;width:80px;height:21px;"></div>
<div class="t " style="left:602px;top:616px;font:11px 'Liberation Sans',sans-serif;line-height:13px;">&lt;&lt; Regular</div>
<div class="b btn" style="left:692px;top:611px;width:91px;height:21px;"></div>
<div class="t " style="left:695px;top:616px;font:11px 'Liberation Sans',sans-serif;line-height:13px;">Restore <u>D</u>efaults</div>
<div class="b btn" style="left:790px;top:611px;width:74px;height:21px;"></div>
<div class="t " style="left:812px;top:616px;font:11px 'Liberation Sans',sans-serif;line-height:13px;letter-spacing:-0.25px;"><u>A</u>pply</div>
<div class="b btn def" style="left:705px;top:652px;width:74px;height:21px;"></div>
<div class="t " style="left:734px;top:657px;font:11px 'Liberation Sans',sans-serif;line-height:13px;letter-spacing:-1.20px;">OK</div>
<div class="b btn" style="left:786px;top:652px;width:74px;height:21px;"></div>
<div class="t " style="left:805px;top:657px;font:11px 'Liberation Sans',sans-serif;line-height:13px;letter-spacing:-0.28px;">Cancel</div>
<svg style="position:absolute;left:16px;top:654px" width="17" height="17"><circle cx="8" cy="8" r="6.5" fill="#F4FAFC" stroke="#1C4C7C" stroke-width="1.2"/><path d="M5.8 6 Q5.8 3.6 8 3.6 Q10.3 3.6 10.3 5.6 Q10.3 7 8.3 8 L8.3 9.6" stroke="#1C4C7C" stroke-width="1.6" fill="none"/><rect x="7.3" y="10.8" width="2" height="2" fill="#1C4C7C"/></svg></body></html>
